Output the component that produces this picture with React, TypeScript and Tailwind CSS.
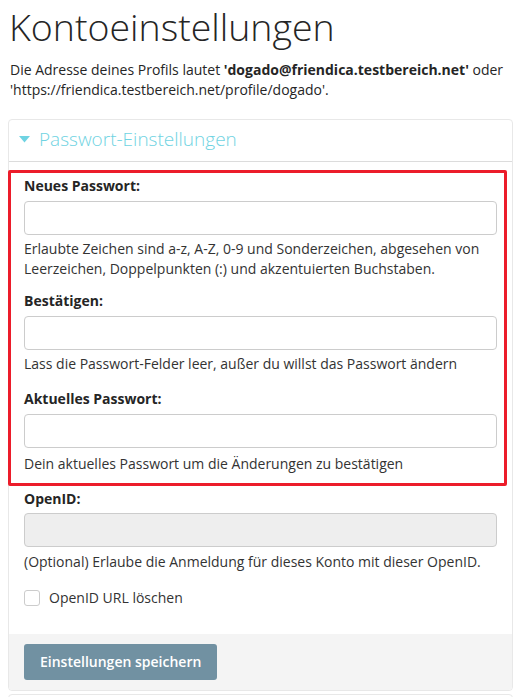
const fields = [
  {
    label: "Neues Passwort:",
    help: "Erlaubte Zeichen sind a-z, A-Z, 0-9 und Sonderzeichen, abgesehen von Leerzeichen, Doppelpunkten (:) und akzentuierten Buchstaben.",
    gap: "mb-[12px]",
    helpTop: "mt-[4px]",
  },
  {
    label: "Bestätigen:",
    help: "Lass die Passwort-Felder leer, außer du willst das Passwort ändern",
    gap: "mb-[15px]",
    helpTop: "mt-[4px]",
  },
  {
    label: "Aktuelles Passwort:",
    help: "Dein aktuelles Passwort um die Änderungen zu bestätigen",
    gap: "mb-[9px]",
    helpTop: "mt-[6px]",
  },
]

export default function App() {
  return (
    <div className="min-h-[697px] bg-white px-2 font-['Open_Sans',sans-serif] text-[14px] leading-5 text-[#252525]">
      <h1 className="pt-[2px] pl-[1px] text-[37.5px] leading-[50px] font-light">Kontoeinstellungen</h1>
      <p className="mt-[8px] pl-[2px]">
        Die Adresse deines Profils lautet <b className="font-bold">'dogado@friendica.testbereich.net'</b> oder
        'https://friendica.testbereich.net/profile/dogado'.
      </p>

      <section className="mt-[19px] rounded border border-[#e8e8e8] bg-white">
        <div className="flex h-[42px] items-center gap-[9px] border-b border-[#dcdcdc] pb-[4px] pl-[10px]">
          <svg width="11" height="7" viewBox="0 0 11 7" className="mt-[1px]">
            <path d="M0 0 H11 L5.5 6.5 Z" fill="#6fd3e2" />
          </svg>
          <span className="text-[19px] leading-7 font-light text-[#6fd3e2]">Passwort-Einstellungen</span>
        </div>

        <div className="px-[15px] pt-[8px]">
          <div className="-ml-[16px] -mr-[10px] rounded-[2px] border-[3px] border-[#ec1c2a] pt-[3px] pl-[13px] pr-[7px]">
            {fields.map(f => (
              <div key={f.label} className={f.gap}>
                <label className="block font-bold">{f.label}</label>
                <div className="mt-[5px] h-[34px] rounded border border-[#cccccc] bg-white" />
                <p className={`${f.helpTop} text-[#333]`}>{f.help}</p>
              </div>
            ))}
          </div>

          <div className="mt-[3px]">
            <label className="block font-bold">OpenID:</label>
            <div className="mt-[4px] h-[34px] rounded border border-[#cccccc] bg-[#eeeeee]" />
            <p className="mt-[5px] text-[#333]">(Optional) Erlaube die Anmeldung für dieses Konto mit dieser OpenID.</p>
          </div>

          <div className="flex items-center gap-[9px] pt-[16px] pb-[26px]">
            <span className="h-[16px] w-[16px] rounded-[3px] border border-[#cccccc] bg-white" />
            <span className="text-[#333]">OpenID URL löschen</span>
          </div>
        </div>

        <div className="rounded-b bg-[#f4f4f4] px-[15px] pt-[10px] pb-[10px]">
          <button className="h-[36px] rounded-[3px] bg-[#7191a2] px-[16px] font-semibold text-white">
            Einstellungen speichern
          </button>
        </div>
      </section>

      <div className="mt-[3px] h-[20px] rounded-t border border-[#e8e8e8]" />
    </div>
  )
}
